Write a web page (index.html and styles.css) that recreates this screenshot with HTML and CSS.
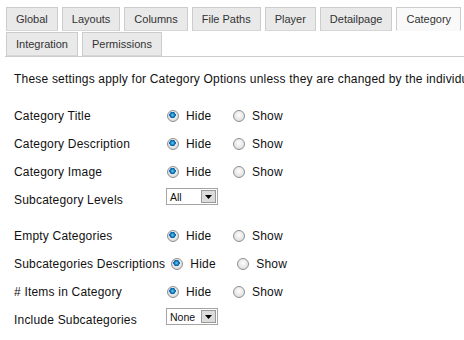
FILE: index.html
```html
<!DOCTYPE html>
<html lang="en">
<head>
    <meta charset="UTF-8">
    <title>Category Settings</title>
    <link rel="stylesheet" href="styles.css">
</head>
<body>
    <ul class="tabs">
        <li class="tab">Global</li>
        <li class="tab">Layouts</li>
        <li class="tab">Columns</li>
        <li class="tab">File Paths</li>
        <li class="tab">Player</li>
        <li class="tab">Detailpage</li>
        <li class="tab active">Category</li>
        <li class="tab">Icons</li>
        <li class="tab">Integration</li>
        <li class="tab">Permissions</li>
    </ul>

    <div class="panel">
        <p class="intro">These settings apply for Category Options unless they are changed by the individual category settings.</p>

        <div class="group">
            <div class="row">
                <span class="label">Category Title</span>
                <label class="opt"><input type="radio" name="cat_title" checked> Hide</label>
                <label class="opt"><input type="radio" name="cat_title"> Show</label>
            </div>
            <div class="row">
                <span class="label">Category Description</span>
                <label class="opt"><input type="radio" name="cat_desc" checked> Hide</label>
                <label class="opt"><input type="radio" name="cat_desc"> Show</label>
            </div>
            <div class="row">
                <span class="label">Category Image</span>
                <label class="opt"><input type="radio" name="cat_image" checked> Hide</label>
                <label class="opt"><input type="radio" name="cat_image"> Show</label>
            </div>
            <div class="row">
                <span class="label">Subcategory Levels</span>
                <span class="select"><span class="select-value">All</span><span class="select-btn"><svg width="7" height="4" viewBox="0 0 7 4"><path d="M0 0h7L3.5 4z" fill="#000"/></svg></span></span>
            </div>
        </div>

        <div class="group">
            <div class="row">
                <span class="label">Empty Categories</span>
                <label class="opt"><input type="radio" name="empty" checked> Hide</label>
                <label class="opt"><input type="radio" name="empty"> Show</label>
            </div>
            <div class="row">
                <span class="label">Subcategories Descriptions</span>
                <label class="opt"><input type="radio" name="sub_desc" checked> Hide</label>
                <label class="opt"><input type="radio" name="sub_desc"> Show</label>
            </div>
            <div class="row">
                <span class="label"># Items in Category</span>
                <label class="opt"><input type="radio" name="items" checked> Hide</label>
                <label class="opt"><input type="radio" name="items"> Show</label>
            </div>
            <div class="row">
                <span class="label">Include Subcategories</span>
                <span class="select"><span class="select-value">None</span><span class="select-btn"><svg width="7" height="4" viewBox="0 0 7 4"><path d="M0 0h7L3.5 4z" fill="#000"/></svg></span></span>
            </div>
        </div>
    </div>
</body>
</html>
```

FILE: styles.css
```css
body {
    font-family: "Liberation Sans", Arial, sans-serif;
    font-size: 12px;
    letter-spacing: 0.2px;
    color: #111;
    background-color: #fff;
    margin: 0;
    padding: 0;
    overflow: hidden;
}

.tabs {
    display: flex;
    flex-wrap: wrap;
    column-gap: 4px;
    row-gap: 1px;
    list-style: none;
    margin: 7px 0 0 5px;
    padding: 0 0 0 1px;
    border-bottom: 1px solid #ccc;
    width: 520px;
    letter-spacing: 0;
}

.tab {
    height: 22px;
    line-height: 22px;
    padding: 0 9px;
    font-size: 11px;
    color: #333;
    background-color: #e9e9e9;
    border: 1px solid #ccc;
    border-bottom: 1px solid #d6d6d6;
    white-space: nowrap;
}

.tab.active {
    background-color: #f9f9f9;
    border-bottom-color: #f9f9f9;
}

.panel {
    padding: 0 0 0 14px;
}

.intro {
    margin: 14px 0 15px;
    line-height: 16px;
    white-space: nowrap;
}

.group {
    margin-bottom: 8px;
}

.row {
    display: flex;
    align-items: center;
    height: 28px;
}

.label {
    min-width: 152px;
    padding-right: 5px;
    box-sizing: border-box;
    white-space: nowrap;
}

.opt {
    display: inline-flex;
    align-items: center;
    width: 66px;
    flex: none;
}

.opt input {
    appearance: none;
    -webkit-appearance: none;
    width: 12px;
    height: 12px;
    margin: 0 7px 0 1px;
    border-radius: 50%;
    border: 1px solid #8f8f8f;
    background: radial-gradient(circle at 50% 40%, #fdfdfd 0, #e6e6e6 60%, #cfcfcf 100%);
    box-sizing: border-box;
}

.opt input:checked {
    background:
        radial-gradient(circle at 45% 40%, #7fd0f5 0, #1b8fd0 1.5px, #0a5a9c 3px, transparent 3.4px),
        radial-gradient(circle at 50% 40%, #fdfdfd 0, #e3e3e3 60%, #c8c8c8 100%);
}

.select {
    display: inline-flex;
    align-items: center;
    width: 52px;
    height: 17px;
    margin-bottom: 7px;
    border: 1px solid #a5a5a5;
    box-sizing: border-box;
    font-size: 10.5px;
    letter-spacing: 0;
    background-color: #fff;
}

.select-value {
    flex: 1;
    padding-left: 3px;
}

.select-btn {
    display: flex;
    align-items: center;
    justify-content: center;
    width: 15px;
    height: 13px;
    margin-right: 1px;
    background-color: #dcdcdc;
    border: 1px solid #9a9a9a;
    box-sizing: border-box;
}
```
